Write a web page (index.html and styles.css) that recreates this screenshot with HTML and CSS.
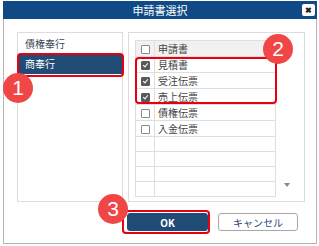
FILE: index.html
```html
<!DOCTYPE html>
<html lang="ja">
<head>
  <meta charset="UTF-8">
  <title>申請書選択</title>
  <link rel="stylesheet" href="styles.css">
</head>
<body>
  <div class="dialog">
    <div class="titlebar">
      <span>申請書選択</span>
      <span class="close">&#x2716;</span>
    </div>

    <div class="content">
      <div class="panel left">
        <div class="item">債権奉行</div>
        <div class="item selected">商奉行</div>
      </div>

      <div class="panel right">
        <table class="grid">
          <tr class="head"><td class="chk"><span class="box"></span></td><td>申請書</td></tr>
          <tr><td class="chk"><span class="box on"></span></td><td>見積書</td></tr>
          <tr><td class="chk"><span class="box on"></span></td><td>受注伝票</td></tr>
          <tr><td class="chk"><span class="box on"></span></td><td>売上伝票</td></tr>
          <tr><td class="chk"><span class="box"></span></td><td>債権伝票</td></tr>
          <tr><td class="chk"><span class="box"></span></td><td>入金伝票</td></tr>
          <tr><td></td><td></td></tr>
          <tr><td></td><td></td></tr>
          <tr><td></td><td></td></tr>
          <tr><td></td><td></td></tr>
        </table>
        <div class="scroll"><span class="arrow"></span></div>
      </div>
    </div>

    <div class="footer">
      <button class="btn primary">OK</button>
      <button class="btn">キャンセル</button>
    </div>

    <div class="mark mark-sel"></div>
    <div class="mark mark-rows"></div>
    <div class="mark mark-ok"></div>

    <div class="badge b1">1</div>
    <div class="badge b2">2</div>
    <div class="badge b3">3</div>
  </div>
</body>
</html>
```

FILE: styles.css
```css
body {
  margin: 0;
  background: #fff;
  font-family: "Noto Sans CJK JP", "Liberation Sans", sans-serif;
  color: #333;
}
.dialog {
  position: relative;
  box-sizing: border-box;
  width: 314px;
  height: 243px;
  margin: 1px 0 0 3px;
  border: 1px solid #b4b4b4;
  border-top: none;
}
.titlebar {
  position: relative;
  height: 18px;
  margin: 0 -1px;
  background: #0f4a86;
  color: #fff;
  font-size: 11px;
  line-height: 18px;
  text-align: center;
}
.close {
  position: absolute;
  right: 2px;
  top: 3px;
  width: 13px;
  height: 12px;
  background: #fff;
  border-radius: 2px;
  color: #222;
  font-size: 8px;
  line-height: 12px;
  font-weight: bold;
}
.content {
  display: flex;
  gap: 5px;
  padding: 13px 10px 0 13px;
}
.panel {
  box-sizing: border-box;
  height: 170px;
  border: 1px solid #dcdcdc;
}
.left {
  width: 106px;
  padding-top: 1px;
}
.item {
  height: 20px;
  line-height: 20px;
  padding-left: 7px;
  font-size: 10px;
  color: #3a4a5a;
}
.item.selected {
  background: #1f4b75;
  color: #fff;
}
.right {
  display: flex;
  width: 177px;
  padding: 7px 0 0 6px;
}
.grid {
  border-collapse: collapse;
  width: 141px;
  height: 152px;
  font-size: 10px;
  color: #444;
}
.grid td {
  border: 1px solid #dedede;
  height: 14px;
  padding: 0 0 0 3px;
}
.grid .head td {
  background: #f1f1f1;
  height: 15px;
}
.grid td.chk {
  width: 18px;
  padding: 0;
  text-align: center;
}
.box {
  display: inline-block;
  box-sizing: border-box;
  width: 9px;
  height: 9px;
  border: 1px solid #8a8a8a;
  border-radius: 1px;
  background: #fff;
  vertical-align: middle;
  position: relative;
  top: -1px;
}
.box.on {
  background: #5a5a5a;
  border-color: #5a5a5a;
}
.box.on::after {
  content: "";
  position: absolute;
  left: 2px;
  top: 0;
  width: 2px;
  height: 4px;
  border: solid #fff;
  border-width: 0 1.5px 1.5px 0;
  transform: rotate(40deg);
}
.scroll {
  flex: 1;
  display: flex;
  align-items: flex-end;
  justify-content: center;
  height: 152px;
}
.arrow {
  width: 0;
  height: 0;
  margin: 0 6px 5px 0;
  border-left: 3px solid transparent;
  border-right: 3px solid transparent;
  border-top: 4px solid #888;
}
.footer {
  display: flex;
  justify-content: flex-end;
  gap: 10px;
  padding: 11px 18px 0 0;
}
.btn {
  box-sizing: border-box;
  width: 80px;
  height: 18px;
  padding: 0;
  border: 1px solid #a8a8a8;
  border-radius: 3px;
  background: #fff;
  color: #1f4b75;
  font-family: "Noto Sans CJK JP", "Liberation Sans", sans-serif;
  font-size: 10px;
}
.btn.primary {
  width: 81px;
  background: #1f4b75;
  border-color: #1f4b75;
  color: #fff;
  font-weight: bold;
}
.mark {
  position: absolute;
  border: 2px solid #e60012;
  border-radius: 4px;
}
.mark-sel {
  left: 13px;
  top: 52px;
  width: 103px;
  height: 20px;
}
.mark-rows {
  left: 131px;
  top: 56px;
  width: 138px;
  height: 43px;
}
.mark-ok {
  left: 118px;
  top: 209px;
  width: 84px;
  height: 20px;
}
.badge {
  position: absolute;
  width: 30px;
  height: 30px;
  border-radius: 50%;
  background: #f04646;
  color: #fff;
  font-family: "Liberation Sans", sans-serif;
  font-size: 21px;
  line-height: 30px;
  text-align: center;
}
.b1 { left: -1px; top: 72px; }
.b2 { left: 259px; top: 33px; }
.b3 { left: 94px; top: 193px; }
```
